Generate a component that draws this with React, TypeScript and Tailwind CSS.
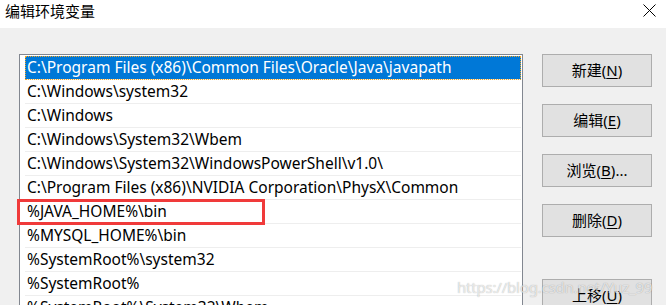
import React from 'react';

const rows = [
  'C:\\Program Files (x86)\\Common Files\\Oracle\\Java\\javapath',
  'C:\\Windows\\system32',
  'C:\\Windows',
  'C:\\Windows\\System32\\Wbem',
  'C:\\Windows\\System32\\WindowsPowerShell\\v1.0\\',
  'C:\\Program Files (x86)\\NVIDIA Corporation\\PhysX\\Common',
  '%JAVA_HOME%\\bin',
  '%MYSQL_HOME%\\bin',
  '%SystemRoot%\\system32',
  '%SystemRoot%',
  '%SystemRoot%\\System32\\Wbem',
];

const font = { fontFamily: '"Noto Sans", "Noto Sans CJK SC", sans-serif' };

const DlgButton: React.FC<{ label: string; hotkey: string; suffix?: string; className?: string }> = ({
  label,
  hotkey,
  suffix = '',
  className = '',
}) => (
  <button
    className={`w-[110px] h-[33px] shrink-0 border border-[#adadad] bg-[#e1e1e1] text-[15px] text-black flex items-center justify-center ${className}`}
  >
    {label}(<span className="underline underline-offset-2">{hotkey}</span>){suffix}
  </button>
);

const App: React.FC = () => {
  return (
    <div className="w-[666px] h-[305px] overflow-hidden relative bg-[#f0f0f0]" style={font}>
      {/* Title bar */}
      <div className="h-[28px] bg-white flex items-center justify-between pl-[5px] pr-[10px]">
        <span className="text-[15px] text-black leading-none -mt-[6px]">编辑环境变量</span>
        <svg width="13" height="13" viewBox="0 0 13 13" className="-mt-[8px]">
          <path d="M0.5 0.5 L12.5 12.5 M12.5 0.5 L0.5 12.5" stroke="#000" strokeWidth="1" />
        </svg>
      </div>

      {/* Body */}
      <div className="flex pl-[19px] pt-[26px]">
        {/* Path list */}
        <div className="w-[504px] h-[260px] border border-[#828790] bg-white pt-px pl-[5px] pr-px overflow-hidden shrink-0">
          {rows.map((r, i) => (
            <div
              key={i}
              className={`h-[24px] flex items-center pl-[2px] text-[15.5px] whitespace-nowrap border-b border-[#eeeeee] ${
                i === 0 ? 'bg-[#0078d7] text-white outline-1 outline-dotted outline-[#f5a623] -outline-offset-1' : 'text-black'
              }`}
            >
              {r}
            </div>
          ))}
        </div>

        {/* Buttons */}
        <div className="flex flex-col ml-[19px] gap-[17px]">
          <DlgButton label="新建" hotkey="N" />
          <DlgButton label="编辑" hotkey="E" />
          <DlgButton label="浏览" hotkey="B" suffix="..." />
          <DlgButton label="删除" hotkey="D" />
          <DlgButton label="上移" hotkey="U" className="mt-[25px]" />
        </div>
      </div>

      {/* Red highlight box */}
      <div className="absolute left-[17px] top-[199px] w-[248px] h-[26px] border-[3px] border-[#f03a3a]" />

      {/* Watermark */}
      <div className="absolute left-[457px] top-[276px] text-[15px] tracking-[-0.2px] text-white/70 [text-shadow:0_0_1px_rgba(0,0,0,0.35)] whitespace-nowrap">
        https://blog.csdn.net/Yuz_99
      </div>
    </div>
  );
};

export default App;
